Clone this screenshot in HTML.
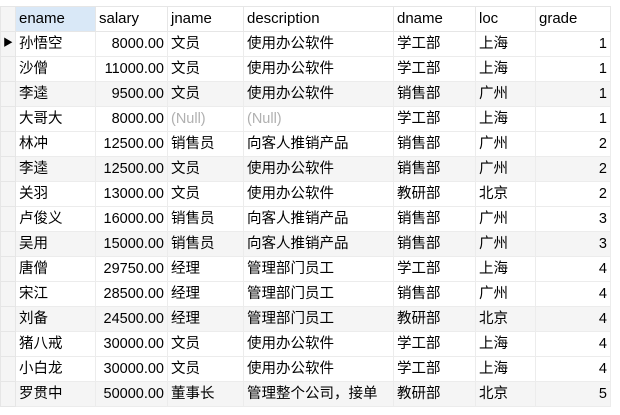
<!DOCTYPE html><html><head><meta charset="utf-8"><style>
body{margin:0;background:#fff;width:620px;height:415px;overflow:hidden;font-family:"Liberation Sans","Noto Sans CJK SC",sans-serif;font-size:14.5px;color:#000}
table{position:absolute;left:0;top:6px;border-collapse:collapse;table-layout:fixed}
td{height:24px;padding:0 3px;border:1px solid #ececec;white-space:nowrap;overflow:hidden;line-height:24px}
td.n{text-align:right}
tr.g td{background:#f5f5f5}
tr.h td{background:#fff;border-color:#e6e6e6;font-size:15px}
td.s{background:#f5f5f5!important;border-color:#e6e6e6;padding:0;font-size:10px;text-align:center}
td.null{color:#b0b0b0}
</style></head><body>
<table>
<colgroup><col style="width:15px"><col style="width:80px"><col style="width:72px"><col style="width:76px"><col style="width:150px"><col style="width:82px"><col style="width:60px"><col style="width:75px"></colgroup>
<tr class="h"><td class="s"></td><td style="background:#d9e8f7">ename</td><td>salary</td><td>jname</td><td>description</td><td>dname</td><td>loc</td><td>grade</td></tr>
<tr><td class="s">▶</td><td>孙悟空</td><td class="n">8000.00</td><td>文员</td><td>使用办公软件</td><td>学工部</td><td>上海</td><td class="n">1</td></tr>
<tr><td class="s"></td><td>沙僧</td><td class="n">11000.00</td><td>文员</td><td>使用办公软件</td><td>学工部</td><td>上海</td><td class="n">1</td></tr>
<tr class="g"><td class="s"></td><td>李逵</td><td class="n">9500.00</td><td>文员</td><td>使用办公软件</td><td>销售部</td><td>广州</td><td class="n">1</td></tr>
<tr><td class="s"></td><td>大哥大</td><td class="n">8000.00</td><td class="null">(Null)</td><td class="null">(Null)</td><td>学工部</td><td>上海</td><td class="n">1</td></tr>
<tr><td class="s"></td><td>林冲</td><td class="n">12500.00</td><td>销售员</td><td>向客人推销产品</td><td>销售部</td><td>广州</td><td class="n">2</td></tr>
<tr class="g"><td class="s"></td><td>李逵</td><td class="n">12500.00</td><td>文员</td><td>使用办公软件</td><td>销售部</td><td>广州</td><td class="n">2</td></tr>
<tr><td class="s"></td><td>关羽</td><td class="n">13000.00</td><td>文员</td><td>使用办公软件</td><td>教研部</td><td>北京</td><td class="n">2</td></tr>
<tr><td class="s"></td><td>卢俊义</td><td class="n">16000.00</td><td>销售员</td><td>向客人推销产品</td><td>销售部</td><td>广州</td><td class="n">3</td></tr>
<tr class="g"><td class="s"></td><td>吴用</td><td class="n">15000.00</td><td>销售员</td><td>向客人推销产品</td><td>销售部</td><td>广州</td><td class="n">3</td></tr>
<tr><td class="s"></td><td>唐僧</td><td class="n">29750.00</td><td>经理</td><td>管理部门员工</td><td>学工部</td><td>上海</td><td class="n">4</td></tr>
<tr><td class="s"></td><td>宋江</td><td class="n">28500.00</td><td>经理</td><td>管理部门员工</td><td>销售部</td><td>广州</td><td class="n">4</td></tr>
<tr class="g"><td class="s"></td><td>刘备</td><td class="n">24500.00</td><td>经理</td><td>管理部门员工</td><td>教研部</td><td>北京</td><td class="n">4</td></tr>
<tr><td class="s"></td><td>猪八戒</td><td class="n">30000.00</td><td>文员</td><td>使用办公软件</td><td>学工部</td><td>上海</td><td class="n">4</td></tr>
<tr><td class="s"></td><td>小白龙</td><td class="n">30000.00</td><td>文员</td><td>使用办公软件</td><td>学工部</td><td>上海</td><td class="n">4</td></tr>
<tr class="g"><td class="s"></td><td>罗贯中</td><td class="n">50000.00</td><td>董事长</td><td>管理整个公司，接单</td><td>教研部</td><td>北京</td><td class="n">5</td></tr>
</table>
</body></html>
